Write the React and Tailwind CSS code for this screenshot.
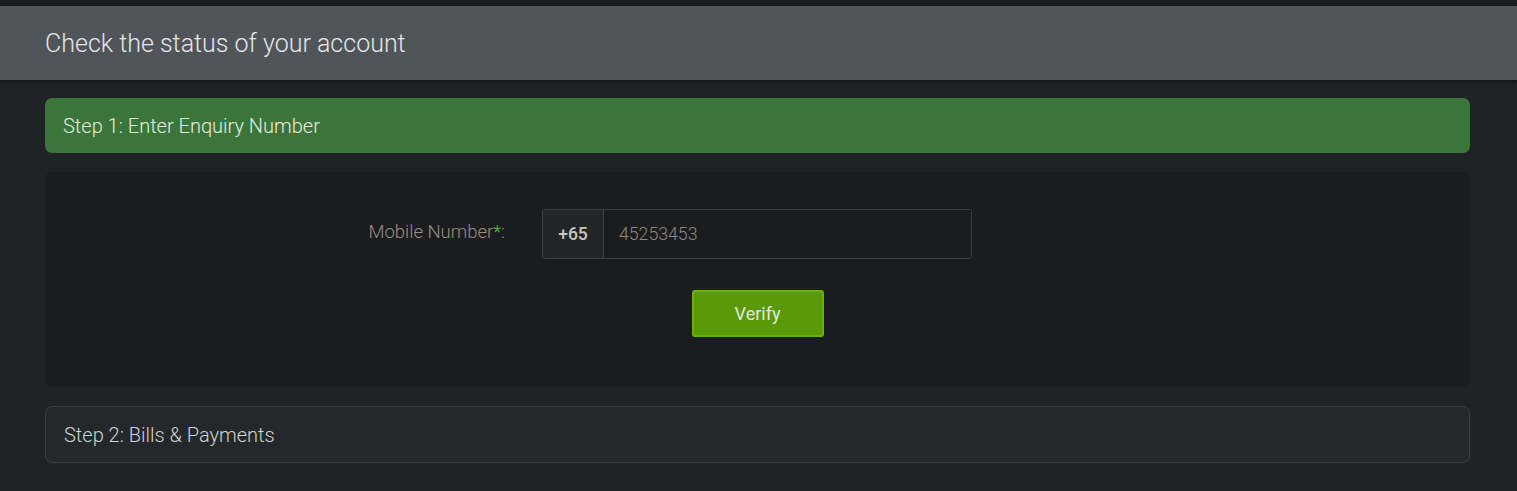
import React from 'react';

/**
 * Account status check page
 */
const App = () => (
  <div className="min-h-[491px] bg-[#202325] font-['Roboto','Liberation_Sans',sans-serif]">
    <div className="h-[6px] bg-[#1b1c1e]" />
    <Header />
    <div className="pl-[45px] pr-[47px] pt-[18px] pb-[28px]">
      <StepBar active label="Step 1: Enter Enquiry Number" />
      <EnquiryPanel />
      <StepBar label="Step 2: Bills & Payments" />
    </div>
  </div>
);

/**
 * Page header
 */
const Header = () => (
  <div className="relative h-[74px] bg-[#50555a] flex items-center px-[45px] shadow-[0_2px_4px_rgba(0,0,0,0.45)]">
    <h1 className="text-[25px] font-light text-[#e4e6e8] mt-[2px]">Check the status of your account</h1>
  </div>
);

/**
 * Step header bar
 */
const StepBar = ({ label, active }) => (
  <div
    className={
      active
        ? 'h-[55px] rounded-[7px] bg-[#3a763a] flex items-center px-[18px]'
        : 'h-[57px] rounded-[7px] bg-[#24282b] border border-[#3a3e42] flex items-center px-[18px]'
    }
  >
    <span className={active ? 'text-[20px] font-light text-[#e6ebe4]' : 'text-[20px] font-light text-[#cfd1d2]'}>
      {label}
    </span>
  </div>
);

/**
 * Mobile number form
 */
const EnquiryPanel = () => (
  <div className="mt-[19px] mb-[19px] h-[215px] rounded-[7px] bg-[#1b1c1e] pt-[37px]">
    <div className="flex items-start">
      <label className="w-[460px] text-right text-[18.5px] font-light text-[#9a8e7f] pt-[10px]">
        Mobile Number<span className="text-[#4cc13a]">*</span>:
      </label>
      <div className="ml-[37px] w-[430px] h-[50px] flex border border-[#3c3f42] rounded-[3px]">
        <div className="w-[61px] flex items-center justify-center bg-[#222627] border-r border-[#3c3f42] text-[17.5px] font-medium text-[#c8c4bc] rounded-l-[3px]">
          +65
        </div>
        <input
          defaultValue="45253453"
          className="flex-1 min-w-0 bg-[#1b1c1e] px-[15px] text-[17.7px] font-light text-[#8f877c] outline-none"
        />
      </div>
    </div>
    <div className="mt-[31px] flex justify-center">
      <button className="w-[132px] h-[47px] rounded-[3px] bg-[#5a9a0a] border-2 border-[#68b20f] text-[18px] text-[#e2e8d8]">
        Verify
      </button>
    </div>
  </div>
);

export default App;
